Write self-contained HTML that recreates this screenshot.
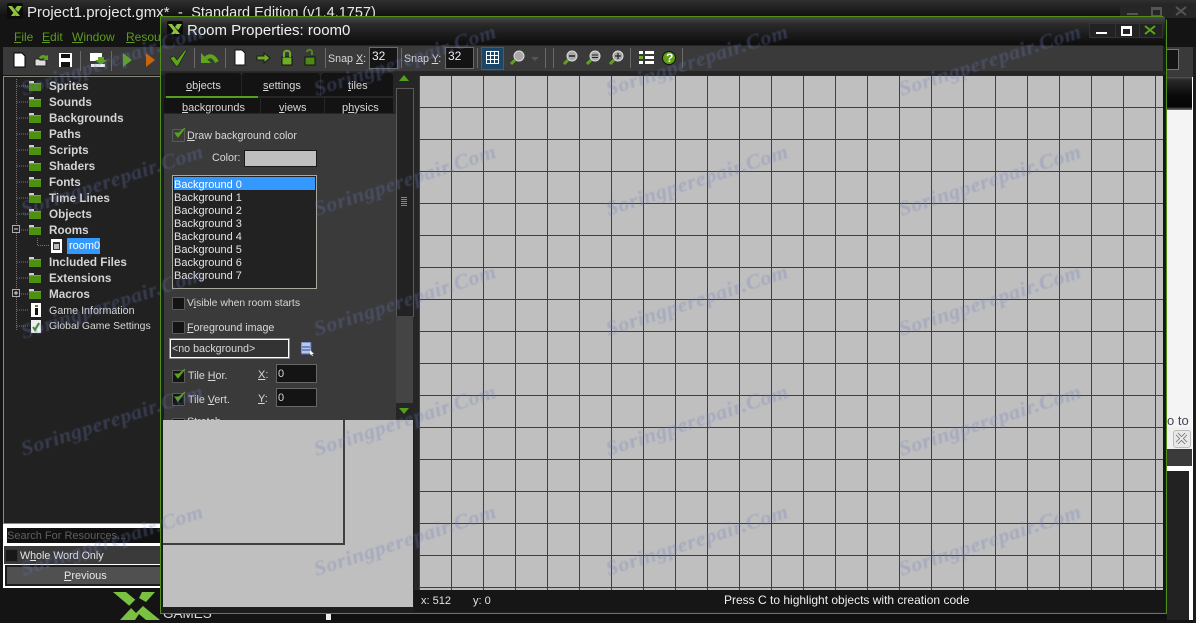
<!DOCTYPE html>
<html><head><meta charset="utf-8"><style>
html,body{margin:0;padding:0;background:#111}
#p{position:relative;width:1196px;height:623px;overflow:hidden;background:#141414;font:10.7px/14px "Liberation Sans",sans-serif;color:#d8d8d8}
#p div,#p svg,#p span.t{position:absolute}
.t{position:absolute;white-space:nowrap;color:#d8d8d8}
.b{font-weight:bold;font-size:11.7px;color:#d4d4d4;margin-top:1px}
.c{width:11px;height:11px;background:#141414;border:1px solid #5a5a5a;border-radius:1px}
.sep{width:1px;height:20px;background:#6a6a6a}
.tab{background:#131313;border-radius:3px 3px 0 0}
.m{color:#5c9a22;font-size:12px}
.f{font-size:11px;margin-top:1px}
.w{position:absolute;white-space:nowrap;font:italic bold 21.5px/26px "Liberation Serif",serif;letter-spacing:.6px;color:rgba(105,122,190,.3);filter:blur(.5px);transform:translate(-50%,-50%) rotate(-18deg);z-index:50;pointer-events:none}
.lb{color:#e4e4e4;left:174px;font-size:11px}
</style></head><body><div id="p">
<svg width="0" height="0"><defs>
<g id="fo"><rect x="0" y="2" width="12" height="8" fill="#4f8f12"/><rect x="0" y="0" width="5" height="2" fill="#cfcfcf"/><rect x="0" y="2" width="12" height="1" fill="#78a84a"/></g>
<g id="lg"><rect width="16" height="16" rx="2" fill="#0c0c0c"/><path d="M1 3h4l8 10H9zM4 13l3-4 2 2-1 2zM8 6l2-3h5L12 8 11 9z" fill="#8fc23f"/></g>
<g id="chk"><path d="M1 6l3 4 7-9-6 5z" fill="#58a41c" stroke="#58a41c"/></g>
<g id="mag"><circle cx="10" cy="6" r="5" fill="#a9a9a9" stroke="#ddd"/><path d="M6 10l-4 4" stroke="#5ea41c" stroke-width="3"/></g>
</defs></svg>

<!-- main window -->
<div style="left:0;top:0;width:1196px;height:16px;background:linear-gradient(#2f2f2f,#111)"></div>
<svg style="left:7px;top:3px" width="16" height="16"><use href="#lg"/></svg>
<span class="t" style="left:27px;top:3px;font-size:15px;line-height:19px;color:#e8e8e8">Project1.project.gmx* &nbsp;-&nbsp; <span style="font-size:14.5px">Standard Edition (v1.4.1757)</span></span>
<div style="left:1120px;top:4px;width:76px;height:14px;background:#262626"></div>
<div style="left:1127px;top:13px;width:11px;height:2px;background:#555"></div>
<div style="left:1151px;top:7px;width:7px;height:5px;border:2px solid #555;border-top-width:3px"></div>
<svg style="left:1175px;top:6px" width="12" height="10"><path d="M1 1l10 8M11 1L1 9" stroke="#555" stroke-width="2"/></svg>
<div style="left:0;top:28px;width:160px;height:19px;background:#141414"></div>
<span class="t m" style="left:14px;top:30px"><u>F</u>ile</span><span class="t m" style="left:42px;top:30px"><u>E</u>dit</span><span class="t m" style="left:72px;top:30px"><u>W</u>indow</span><span class="t m" style="left:126px;top:30px"><u>R</u>esou</span>
<div style="left:3px;top:47px;width:158px;height:28px;background:#3a3a3a"></div>
<svg style="left:12px;top:52px" width="150" height="16">
<path d="M2 1h8l3 3v11H2z" fill="#fff" stroke="#000"/>
<path d="M23 7h4l1 1h6v6H23z" fill="#ddd" stroke="#222"/><path d="M27 6c1-3 5-4 7-2l2-1v5h-5l2-1c-1-1-3-1-4 0z" fill="#5ea41c"/>
<rect x="47" y="1" width="13" height="14" fill="#fff"/><rect x="49" y="2" width="9" height="4" fill="#111"/><rect x="49" y="10" width="9" height="5" fill="#111"/>
<rect x="78" y="1" width="12" height="8" fill="#fff"/><path d="M86 5h6v3h3l-6 5-6-5h3z" fill="#5ea41c"/><rect x="79" y="12" width="14" height="3" fill="#eee"/>
<path d="M111 1l9 7-9 7z" fill="#5ea41c"/><path d="M134 1l9 7-9 7z" fill="#c7650f"/>
</svg>
<div class="sep" style="left:80px;top:51px"></div><div class="sep" style="left:111px;top:51px"></div>
<div style="left:3px;top:76px;width:157px;height:446px;background:#212121;border:1px solid #8a8a80;border-right:0"></div>
<svg style="left:15px;top:79px" width="20" height="256"><path d="M1.500 0V252M2 7h12M2 23h12M2 39h12M2 55h12M2 71h12M2 87h12M2 103h12M2 119h12M2 135h12M2 151h12M2 183h12M2 199h12M2 215h12M2 231h12M2 247h12" stroke="#777" stroke-dasharray="1 1" fill="none"/></svg>
<svg style="left:12px;top:80px" width="30" height="230">
<use href="#fo" x="17" y="1"/><use href="#fo" x="17" y="17"/><use href="#fo" x="17" y="33"/><use href="#fo" x="17" y="49"/><use href="#fo" x="17" y="65"/><use href="#fo" x="17" y="81"/><use href="#fo" x="17" y="97"/><use href="#fo" x="17" y="113"/><use href="#fo" x="17" y="129"/><use href="#fo" x="17" y="145"/><use href="#fo" x="17" y="177"/><use href="#fo" x="17" y="193"/><use href="#fo" x="17" y="209"/>
</svg>
<span class="t b" style="left:49px;top:79px">Sprites</span><span class="t b" style="left:49px;top:95px">Sounds</span><span class="t b" style="left:49px;top:111px">Backgrounds</span><span class="t b" style="left:49px;top:127px">Paths</span><span class="t b" style="left:49px;top:143px">Scripts</span><span class="t b" style="left:49px;top:159px">Shaders</span><span class="t b" style="left:49px;top:175px">Fonts</span><span class="t b" style="left:49px;top:191px">Time Lines</span><span class="t b" style="left:49px;top:207px">Objects</span><span class="t b" style="left:49px;top:223px">Rooms</span><span class="t b" style="left:49px;top:255px">Included Files</span><span class="t b" style="left:49px;top:271px">Extensions</span><span class="t b" style="left:49px;top:287px">Macros</span>
<span class="t" style="left:49px;top:304px">Game Information</span><span class="t" style="left:49px;top:320px;font-size:10.4px">Global Game Settings</span>
<svg style="left:12px;top:225px" width="8" height="10"><rect x=".5" y=".5" width="7" height="7" fill="#222" stroke="#aaa"/><path d="M2 4h4" stroke="#ddd"/></svg>
<svg style="left:12px;top:289px" width="8" height="10"><rect x=".5" y=".5" width="7" height="7" fill="#222" stroke="#aaa"/><path d="M2 4h4M4 2v4" stroke="#ddd"/></svg>
<svg style="left:36px;top:238px" width="26" height="16"><path d="M1.500 0V8M2 7.500h12" stroke="#777" stroke-dasharray="1 1"/><rect x="15" y="1" width="11" height="14" fill="#fff"/><rect x="17" y="4" width="7" height="8" fill="#333"/><rect x="18" y="6" width="5" height="5" fill="#bbb"/></svg>
<div style="left:67px;top:238px;width:33px;height:16px;background:#3399ff"></div>
<span class="t" style="left:69px;top:239px;color:#fff;font-size:11px">room0</span>
<svg style="left:30px;top:303px" width="12" height="30"><rect x="1" y="0" width="10" height="14" fill="#fff"/><rect x="5" y="2" width="3" height="2" fill="#4f8f12"/><rect x="5" y="5" width="3" height="7" fill="#111"/><rect x="1" y="17" width="10" height="13" fill="#eee"/><path d="M3 24l2 3 4-7" stroke="#3f8f12" stroke-width="2" fill="none"/></svg>

<!-- search area -->
<div style="left:3px;top:524px;width:157px;height:64px;background:#fff"></div>
<div style="left:7px;top:528px;width:153px;height:15px;background:#111"></div>
<span class="t f" style="left:7px;top:528px;color:#5f5f5f">Search For Resources...</span>
<div style="left:4px;top:546px;width:156px;height:18px;background:#3a3a3a"></div>
<div class="c" style="left:5px;top:549px;background:#181818;border-color:#333"></div>
<span class="t" style="left:20px;top:549px;color:#e4e4e4">W<u>h</u>ole Word Only</span>
<div style="left:5px;top:565px;width:155px;height:21px;background:#1c1c1c"></div>
<div style="left:7px;top:567px;width:153px;height:17px;background:#505050"></div>
<span class="t f" style="left:64px;top:568px;color:#e8e8e8"><u>P</u>revious</span>
<!-- logo -->
<svg style="left:112px;top:591px" width="50" height="32"><path d="M1 1h13l34 28H34zM8 29l14-15 7 6-6 9zM30 1h13L34 11l-7-4z" fill="#7ac142"/><path d="M24 8l7 7-7 7-7-7z" fill="#141414"/></svg>
<span class="t" style="left:163px;top:605px;color:#ddd;font-size:13.5px;line-height:18px">GAMES</span>
<div style="left:326px;top:613px;width:5px;height:7px;background:#eee"></div>
<div style="left:331px;top:613px;width:835px;height:7px;background:#0f0f0f"></div>

<!-- right strip -->
<div style="left:1167px;top:47px;width:29px;height:30px;background:#3a3a3a"></div>
<div style="left:1167px;top:49px;width:11px;height:19px;background:#141414;border:1px solid #777;border-left:0"></div>
<div style="left:1167px;top:77px;width:25px;height:33px;background:linear-gradient(#555 0,#2a2a2a 8%,#0a0a0a 55%,#050505 90%,#777 100%)"></div>
<div style="left:1167px;top:110px;width:25px;height:317px;background:#f4f4f4"></div>
<span class="t" style="left:1167px;top:414px;color:#445;font-size:13px">o to <span style="color:#77f">l</span></span>
<div style="left:1167px;top:427px;width:25px;height:22px;background:#f0f0f0"></div>
<div style="left:1173px;top:430px;width:16px;height:16px;background:#e8e8e8;border:1px solid #bbb;border-radius:3px"></div>
<svg style="left:1174px;top:431px" width="16" height="16"><path d="M3 3l9 9M12 3l-9 9" stroke="#777" stroke-width="3.500"/><path d="M3 3l9 9M12 3l-9 9" stroke="#eee" stroke-width="1.800"/></svg>
<div style="left:1167px;top:449px;width:25px;height:17px;background:#3a3a3a"></div>
<div style="left:1167px;top:466px;width:25px;height:154px;background:#fff"></div>
<div style="left:1167px;top:471px;width:22px;height:149px;background:#222"></div>
<div style="left:1192px;top:77px;width:1px;height:543px;background:#fff"></div>
<div style="left:1193px;top:47px;width:3px;height:576px;background:#1c1c1c"></div>

<!-- room window -->
<div style="left:160px;top:16px;width:1005px;height:596px;border:1px solid #528f18;background:#1d1d1d;clip-path:polygon(0 0,calc(100% - 4px) 0,100% 4px,100% 100%,0 100%)"></div>
<div style="left:161px;top:17px;width:1004px;height:29px;background:linear-gradient(#4a4a4a,#2a2a2a 25%,#0f0f0f 90%)"></div>
<svg style="left:167px;top:21px" width="16" height="16"><use href="#lg"/></svg>
<span class="t" style="left:187px;top:21px;font-size:15px;line-height:20px;color:#f0f0f0">Room Properties: room0</span>
<div style="left:1089px;top:23px;width:25px;height:13px;background:#222;border:1px solid #333"></div>
<div style="left:1115px;top:23px;width:23px;height:13px;background:#222;border:1px solid #333"></div>
<div style="left:1139px;top:23px;width:22px;height:13px;background:#222;border:1px solid #333"></div>
<div style="left:1096px;top:32px;width:11px;height:2px;background:#fff"></div>
<div style="left:1121px;top:26px;width:7px;height:5px;border:2px solid #fff;border-top-width:3px"></div>
<svg style="left:1144px;top:25px" width="12" height="10"><path d="M1 1l10 8M11 1L1 9" stroke="#58a41c" stroke-width="2"/></svg>
<!-- room toolbar -->
<div style="left:161px;top:45px;width:1002px;height:25px;background:#3a3a3a;border-top:1px solid #262626;border-bottom:1px solid #262626"></div>
<div style="left:161px;top:71px;width:258px;height:4px;background:#2a2a2a"></div>
<div style="left:419px;top:71px;width:746px;height:5px;background:#262626"></div>
<svg style="left:168px;top:48px" width="160" height="20">
<path d="M2 10l4-2 3 4L17 2h2L10 18H8z" fill="#5ea41c" stroke="#111" stroke-width=".6"/>
<path d="M38 10Q44 5 49 14" stroke="#5ea41c" stroke-width="4" fill="none"/><path d="M33 5v10h10z" fill="#5ea41c"/>
<path d="M67 2h7l3 3v12H67z" fill="#fff" stroke="#111"/>
<path d="M89 8h7V5l6 5-6 5v-3h-7z" fill="#6fae22" stroke="#1a1a1a"/>
<rect x="114" y="9" width="10" height="8" fill="#6fae22" stroke="#111"/><path d="M116 9V5c0-3 6-3 6 0v4" stroke="#6fae22" stroke-width="2" fill="none"/>
<rect x="137" y="9" width="10" height="8" fill="#4c8a18" stroke="#111"/><path d="M144 7V4c0-3-5-3-5 0" stroke="#4c8a18" stroke-width="2" fill="none"/>
</svg>
<div class="sep" style="left:194px;top:48px"></div><div class="sep" style="left:225px;top:48px"></div><div class="sep" style="left:325px;top:48px"></div><div class="sep" style="left:401px;top:48px"></div><div class="sep" style="left:477px;top:48px"></div><div class="sep" style="left:545px;top:48px"></div><div class="sep" style="left:553px;top:48px"></div><div class="sep" style="left:630px;top:48px"></div><div class="sep" style="left:682px;top:48px"></div>
<span class="t" style="left:328px;top:52px">Snap <u>X</u>:</span>
<div style="left:369px;top:47px;width:27px;height:20px;background:#141414;border:1px solid #6a6a6a"></div>
<span class="t" style="left:372px;top:49px;font-size:12px;color:#eee">32</span>
<span class="t" style="left:404px;top:52px">Snap <u>Y</u>:</span>
<div style="left:445px;top:47px;width:27px;height:20px;background:#141414;border:1px solid #6a6a6a"></div>
<span class="t" style="left:448px;top:49px;font-size:12px;color:#eee">32</span>
<div style="left:481px;top:47px;width:21px;height:21px;background:#1c4668;border:1px solid #2a6494"></div>
<svg style="left:486px;top:50px" width="14" height="15"><path d="M.500 1.500h12v12H.500zM4.500 1.500v12M8.500 1.500v12M.500 5.500h12M.500 9.500h12" stroke="#fff" fill="none"/></svg>
<svg style="left:509px;top:50px" width="20" height="18"><use href="#mag"/></svg>
<svg style="left:530px;top:56px" width="10" height="6"><path d="M1 1h8L5 5z" fill="#555"/></svg>
<svg style="left:562px;top:50px" width="18" height="16"><use href="#mag"/><path d="M7 6h6" stroke="#222" stroke-width="1.500"/></svg>
<svg style="left:585px;top:50px" width="18" height="16"><use href="#mag"/><path d="M7 5h6M7 7.500h6" stroke="#222"/></svg>
<svg style="left:608px;top:50px" width="18" height="16"><use href="#mag"/><path d="M7 6h6M10 3v6" stroke="#222" stroke-width="1.200"/></svg>
<svg style="left:639px;top:50px" width="15" height="15"><rect y="1" width="4" height="3" fill="#fff"/><rect y="6" width="4" height="3" fill="#6fae22"/><rect y="11" width="4" height="3" fill="#fff"/><rect x="6" y="1" width="9" height="3" fill="#fff"/><rect x="6" y="6" width="9" height="3" fill="#fff"/><rect x="6" y="11" width="9" height="3" fill="#fff"/></svg>
<svg style="left:662px;top:51px" width="14" height="14"><circle cx="7" cy="7" r="6.500" fill="#5f9f14" stroke="#111"/></svg>
<span class="t" style="left:666px;top:51px;font-size:12px;font-weight:bold;color:#fff">?</span>

<!-- side panel -->
<div style="left:164px;top:72px;width:232px;height:348px;background:#3a3a3a"></div>
<div style="left:164px;top:72px;width:232px;height:42px;background:#262626"></div>
<div class="tab" style="left:165px;top:73px;width:76px;height:23px"></div>
<div class="tab" style="left:242px;top:73px;width:78px;height:23px"></div>
<div class="tab" style="left:321px;top:73px;width:72px;height:23px"></div>
<div style="left:166px;top:96px;width:92px;height:2px;background:#55a01a"></div>
<div style="left:164px;top:98px;width:96px;height:15px;background:#131313"></div>
<div style="left:261px;top:98px;width:63px;height:15px;background:#131313"></div>
<div style="left:325px;top:98px;width:68px;height:15px;background:#131313"></div>
<span class="t f" style="left:186px;top:78px"><u>o</u>bjects</span><span class="t f" style="left:263px;top:78px"><u>s</u>ettings</span><span class="t f" style="left:348px;top:78px"><u>t</u>iles</span>
<span class="t f" style="left:182px;top:100px"><u>b</u>ackgrounds</span><span class="t f" style="left:279px;top:100px"><u>v</u>iews</span><span class="t f" style="left:342px;top:100px">p<u>h</u>ysics</span>

<div class="c" style="left:172px;top:129px;background:#3a3a3a"></div>
<svg style="left:174px;top:127px" width="13" height="13"><use href="#chk"/></svg>
<span class="t" style="left:187px;top:129px"><u>D</u>raw background color</span>
<span class="t" style="left:212px;top:151px">Color:</span>
<div style="left:244px;top:150px;width:71px;height:15px;background:#bfbfbf;border:1px solid #1a1a1a"></div>
<div style="left:172px;top:175px;width:143px;height:112px;background:#222;border:1px solid #a8a89c"></div>
<div style="left:174px;top:177px;width:141px;height:13px;background:#3399ff"></div>
<span class="t lb" style="top:178px;color:#fff">Background 0</span><span class="t lb" style="top:191px">Background 1</span><span class="t lb" style="top:204px">Background 2</span><span class="t lb" style="top:217px">Background 3</span><span class="t lb" style="top:230px">Background 4</span><span class="t lb" style="top:243px">Background 5</span><span class="t lb" style="top:256px">Background 6</span><span class="t lb" style="top:269px">Background 7</span>
<div class="c" style="left:172px;top:297px"></div><span class="t" style="left:187px;top:297px;font-size:10.4px">V<u>i</u>sible when room starts</span>
<div class="c" style="left:172px;top:321px"></div><span class="t" style="left:187px;top:321px"><u>F</u>oreground image</span>
<div style="left:170px;top:339px;width:117px;height:17px;background:#333;border:1px solid #fff;box-shadow:0 0 0 1px #888"></div>
<span class="t" style="left:172px;top:342px">&lt;no background&gt;</span>
<svg style="left:301px;top:342px" width="14" height="15"><rect x="0" y="0" width="10" height="12" fill="#b8c6ea" stroke="#4a64b0"/><path d="M1 5h8M1 8h8" stroke="#2a44a0"/><path d="M9 8l4 4-2 0 1 2-1 0-1-2-1 1z" fill="#fff"/></svg>
<div class="c" style="left:172px;top:370px"></div><svg style="left:174px;top:368px" width="13" height="13"><use href="#chk"/></svg>
<span class="t" style="left:188px;top:369px">Tile <u>H</u>or.</span><span class="t f" style="left:258px;top:367px"><u>X</u>:</span>
<div style="left:276px;top:364px;width:39px;height:17px;background:#141414;border:1px solid #666"></div><span class="t f" style="left:278px;top:366px">0</span>
<div class="c" style="left:172px;top:393px"></div><svg style="left:174px;top:391px" width="13" height="13"><use href="#chk"/></svg>
<span class="t" style="left:188px;top:393px">Tile <u>V</u>ert.</span><span class="t f" style="left:258px;top:391px"><u>Y</u>:</span>
<div style="left:276px;top:388px;width:39px;height:17px;background:#141414;border:1px solid #666"></div><span class="t f" style="left:278px;top:390px">0</span>
<div class="c" style="left:172px;top:418px;height:2px;border-bottom:0"></div><span class="t" style="left:187px;top:416px;height:4px;overflow:hidden;line-height:12px">Stretch</span>
<!-- scrollbar -->
<div style="left:396px;top:72px;width:18px;height:348px;background:#262626"></div>
<svg style="left:398px;top:74px" width="12" height="8"><path d="M6 1l5 6H1z" fill="#55a01a"/></svg>
<div style="left:396px;top:88px;width:16px;height:228px;background:#222;border:1px solid #5a5a5a;border-bottom:0"></div>
<div style="left:396px;top:316px;width:17px;height:87px;background:#444"></div>
<svg style="left:401px;top:197px" width="7" height="9"><path d="M0 .500h6M0 2.500h6M0 4.500h6M0 6.500h6M0 8.500h6" stroke="#5fae14"/></svg>
<svg style="left:398px;top:407px" width="12" height="8"><path d="M6 7l5-6H1z" fill="#55a01a"/></svg>
<!-- grey bottom left -->
<div style="left:163px;top:420px;width:250px;height:187px;background:#bfbfbf"></div>
<div style="left:163px;top:420px;width:180px;height:123px;background:#bfbfbf;border-right:2px solid #3f3f3f;border-bottom:2px solid #3f3f3f"></div>
<!-- canvas -->
<div style="left:419px;top:75px;width:744px;height:515px;background-color:#bfbfbf;background-image:linear-gradient(90deg,#3f3f3f 1px,transparent 1px),linear-gradient(#3f3f3f 1px,transparent 1px);background-size:32px 32px"></div>
<div style="left:419px;top:75px;width:744px;height:1px;background:#2a2a2a"></div>
<div style="left:414px;top:72px;width:5px;height:535px;background:#262626"></div>
<!-- status -->
<div style="left:414px;top:590px;width:751px;height:22px;background:#161616"></div>
<div style="left:1163px;top:75px;width:2px;height:515px;background:#161616"></div>
<span class="t f" style="left:421px;top:593px;color:#e4e4e4">x: 512</span><span class="t f" style="left:473px;top:593px;color:#e4e4e4">y: 0</span>
<span class="t" style="left:724px;top:593px;color:#f0f0f0;font-size:12px">Press C to highlight objects with creation code</span>

<!-- watermarks -->
<span class="w" style="left:112px;top:60px">Soringperepair.Com</span><span class="w" style="left:405px;top:60px">Soringperepair.Com</span><span class="w" style="left:697px;top:60px">Soringperepair.Com</span><span class="w" style="left:990px;top:60px">Soringperepair.Com</span>
<span class="w" style="left:112px;top:180px">Soringperepair.Com</span><span class="w" style="left:405px;top:180px">Soringperepair.Com</span><span class="w" style="left:697px;top:180px">Soringperepair.Com</span><span class="w" style="left:990px;top:180px">Soringperepair.Com</span>
<span class="w" style="left:112px;top:303px">Soringperepair.Com</span><span class="w" style="left:405px;top:300px">Soringperepair.Com</span><span class="w" style="left:697px;top:300px">Soringperepair.Com</span><span class="w" style="left:990px;top:300px">Soringperepair.Com</span>
<span class="w" style="left:112px;top:420px">Soringperepair.Com</span><span class="w" style="left:405px;top:420px">Soringperepair.Com</span><span class="w" style="left:697px;top:420px">Soringperepair.Com</span><span class="w" style="left:990px;top:420px">Soringperepair.Com</span>
<span class="w" style="left:112px;top:540px">Soringperepair.Com</span><span class="w" style="left:405px;top:540px">Soringperepair.Com</span><span class="w" style="left:697px;top:540px">Soringperepair.Com</span><span class="w" style="left:990px;top:540px">Soringperepair.Com</span>
</div></body></html>
